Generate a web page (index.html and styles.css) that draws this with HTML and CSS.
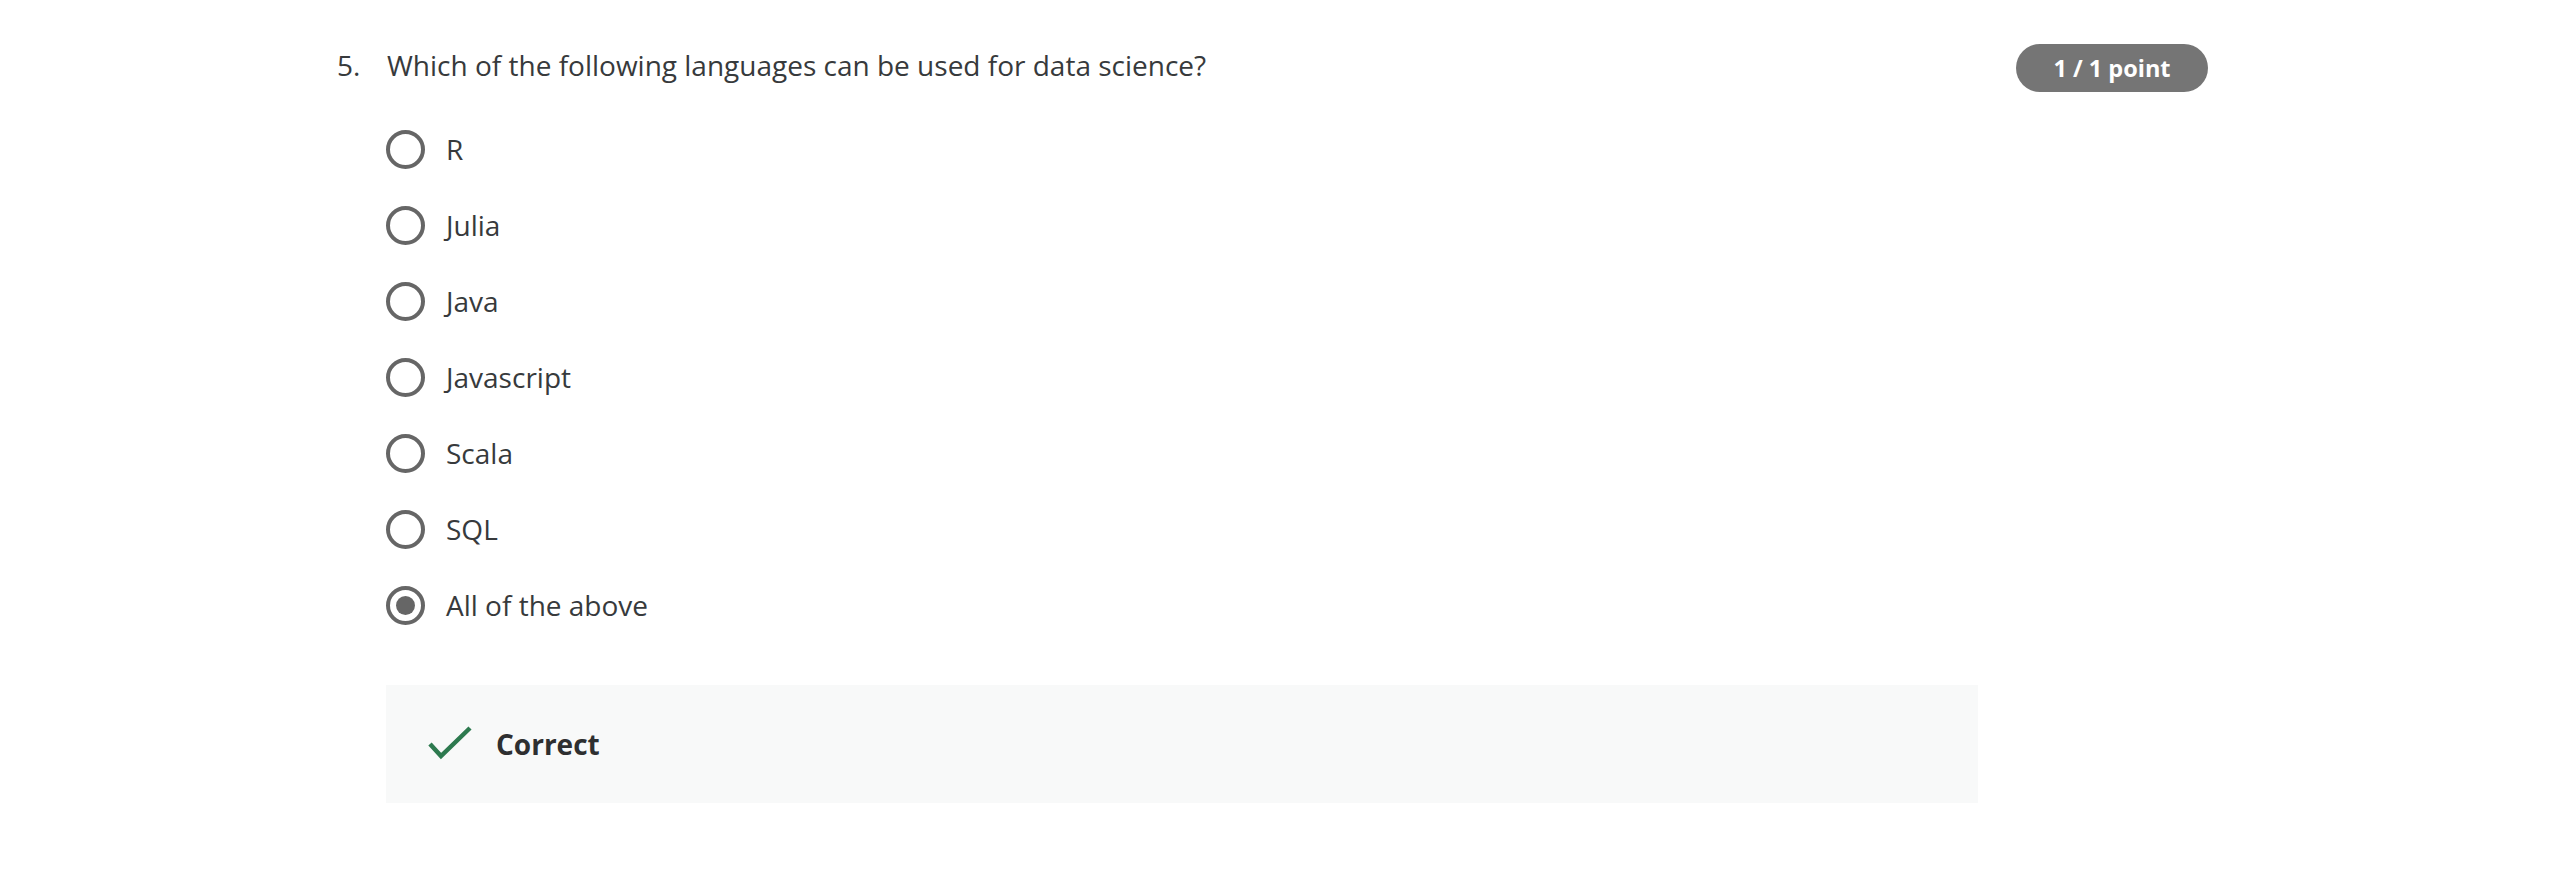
FILE: index.html
```html
<!DOCTYPE html>
<html lang="en">
<head>
<meta charset="utf-8">
<title>Quiz question</title>
<link rel="stylesheet" href="styles.css">
</head>
<body>
<main class="question">
  <div class="question-head">
    <div class="q-number">5.</div>
    <div class="q-text">Which of the following languages can be used for data science?</div>
    <div class="q-score">1 / 1 point</div>
  </div>
  <ul class="options">
    <li class="option"><span class="radio"></span><span class="label">R</span></li>
    <li class="option"><span class="radio"></span><span class="label">Julia</span></li>
    <li class="option"><span class="radio"></span><span class="label">Java</span></li>
    <li class="option"><span class="radio"></span><span class="label">Javascript</span></li>
    <li class="option"><span class="radio"></span><span class="label">Scala</span></li>
    <li class="option"><span class="radio"></span><span class="label">SQL</span></li>
    <li class="option"><span class="radio checked"></span><span class="label">All of the above</span></li>
  </ul>
  <div class="feedback">
    <svg class="check" width="46" height="36" viewBox="0 0 46 36" aria-hidden="true">
      <path d="M2 18 L13 30 L42 2" fill="none" stroke="#2d7a4f" stroke-width="4.5"/>
    </svg>
    <span class="feedback-text">Correct</span>
  </div>
</main>
</body>
</html>
```

FILE: styles.css
```css
html, body {
  margin: 0;
  padding: 0;
  background: #ffffff;
}

body {
  font-family: "Open Sans", "Liberation Sans", sans-serif;
  color: #373a3c;
}

.question {
  margin-left: 337px;
  width: 1871px;
  padding-top: 41px;
}

.question-head {
  display: flex;
  align-items: flex-start;
}

.q-number {
  width: 50px;
  font-size: 28px;
  line-height: 48px;
}

.q-text {
  flex: 1;
  font-size: 28px;
  line-height: 48px;
}

.q-score {
  margin-top: 3px;
  width: 192px;
  height: 48px;
  border-radius: 24px;
  background: #757575;
  color: #ffffff;
  font-weight: 700;
  font-size: 23.5px;
  line-height: 48px;
  text-align: center;
}

.options {
  list-style: none;
  margin: 19px 0 0 49px;
  padding: 0;
}

.option {
  height: 76px;
  display: flex;
  align-items: center;
  gap: 21px;
}

.radio {
  box-sizing: border-box;
  width: 39px;
  height: 39px;
  border: 4.5px solid #666666;
  border-radius: 50%;
  display: flex;
  align-items: center;
  justify-content: center;
}

.radio.checked::after {
  content: "";
  width: 19px;
  height: 19px;
  border-radius: 50%;
  background: #666666;
}

.label {
  font-size: 28px;
}

.feedback {
  margin: 42px 0 0 49px;
  width: 1592px;
  height: 118px;
  background: #f8f9f9;
  display: flex;
  align-items: center;
  padding-left: 42px;
  box-sizing: border-box;
  gap: 22px;
}

.check {
  display: block;
}

.feedback-text {
  font-size: 28px;
  font-weight: 700;
  color: #2e2f30;
}
```
